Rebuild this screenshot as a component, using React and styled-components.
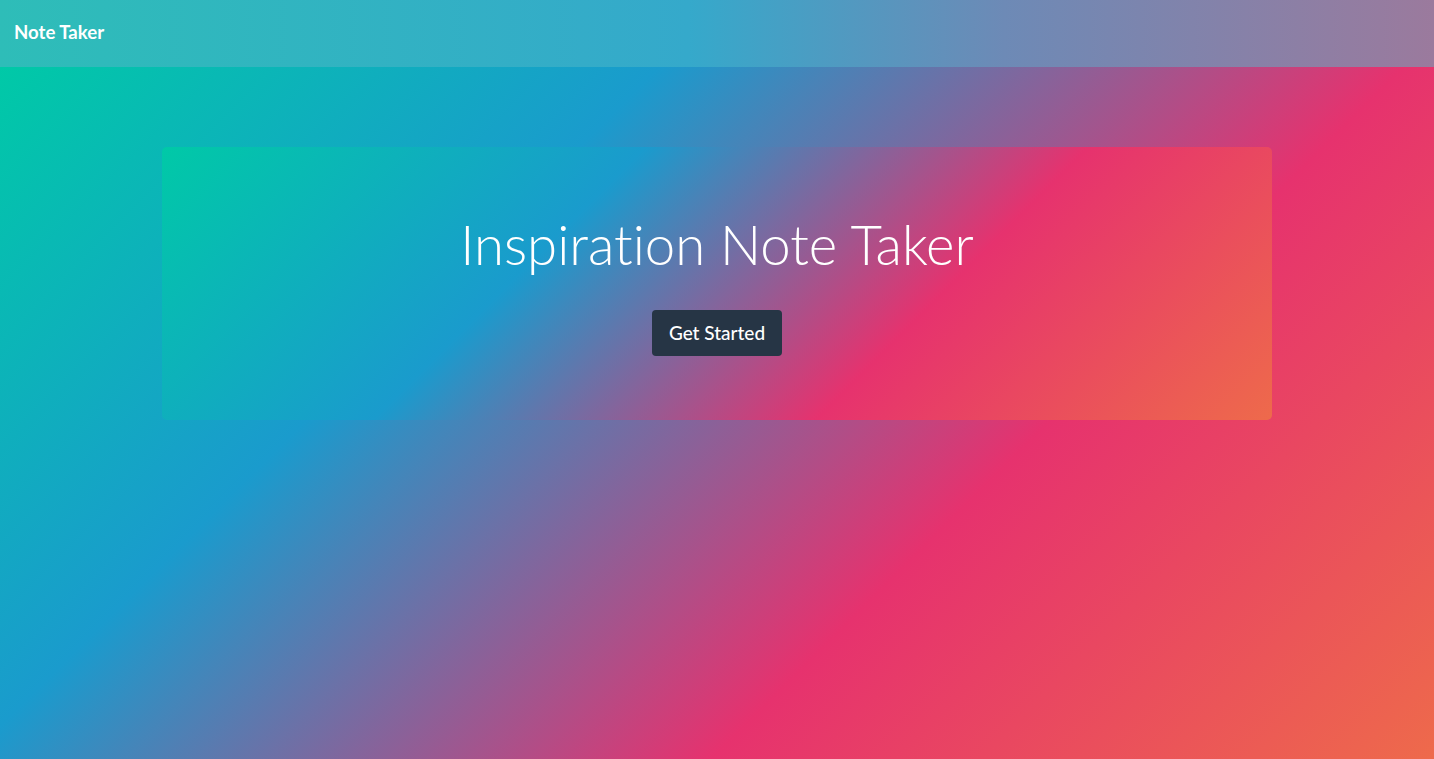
import React from 'react';
import styled, { createGlobalStyle } from 'styled-components';

const GlobalStyle = createGlobalStyle`
  html, body {
    margin: 0;
    padding: 0;
  }
  body {
    font-family: Lato, "Open Sans", sans-serif;
    font-variant-ligatures: none;
    color: #fff;
  }
`;

const Page = styled.div`
  min-height: 100vh;
  display: flex;
  flex-direction: column;
`;

const NavBar = styled.nav`
  height: 67px;
  box-sizing: border-box;
  display: flex;
  align-items: center;
  padding: 0 14px 3px;
  background: linear-gradient(to right, #2ebdb8 0%, #35a9cb 48%, #6d8ab6 70%, #9b7a9d 100%);
`;

const Brand = styled.a`
  font-size: 18.6px;
  font-weight: 700;
  color: #fff;
  text-decoration: none;
`;

const Main = styled.main`
  flex: 1;
  padding-top: 80px;
  background: linear-gradient(135deg, #00c9a7 0%, #1a9bcd 31%, #e6326e 66%, #ee6a4b 100%);
`;

const Jumbotron = styled.section`
  width: 1110px;
  margin: 0 auto;
  padding: 64px 32px;
  box-sizing: border-box;
  border-radius: 5px;
  text-align: center;
  background: linear-gradient(135deg, #00c9a7 0%, #1a9bcd 35%, #e6326e 67%, #ee6a4b 100%);
`;

const Title = styled.h1`
  margin: 0 0 32px;
  font-size: 54.5px;
  font-weight: 300;
  line-height: 67px;
  color: #fff;
`;

const StartButton = styled.button`
  font-family: inherit;
  font-size: 19px;
  font-weight: 500;
  line-height: 1.5;
  color: #fff;
  background: #263545;
  border: none;
  border-radius: 4px;
  padding: 8px 17px;
  height: 46px;
  cursor: pointer;

  &:hover {
    background: #1b2733;
  }
`;

export default function App() {
  return (
    <>
      <GlobalStyle />
      <Page>
        <NavBar>
          <Brand href="#">Note Taker</Brand>
        </NavBar>
        <Main>
          <Jumbotron>
            <Title>Inspiration Note Taker</Title>
            <StartButton>Get Started</StartButton>
          </Jumbotron>
        </Main>
      </Page>
    </>
  );
}
